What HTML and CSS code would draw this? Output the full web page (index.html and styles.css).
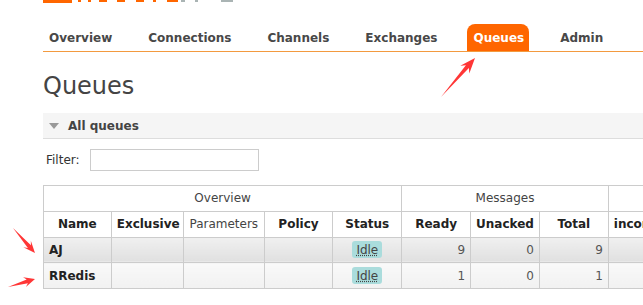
FILE: index.html
```html
<!DOCTYPE html>
<html lang="en">
<head>
    <meta charset="UTF-8">
    <meta name="viewport" content="width=device-width, initial-scale=1.0">
    <title>RabbitMQ Management</title>
    <link rel="stylesheet" href="styles.css">
</head>
<body>

<div class="page">
    <!-- logo, scrolled mostly out of view -->
    <svg class="logo" width="220" height="3" viewBox="0 0 220 3">
        <rect x="0" y="0" width="29" height="3" fill="#f60"/>
        <rect x="35" y="0" width="3" height="2" fill="#f60"/>
        <rect x="45" y="0" width="3" height="2" fill="#f60"/>
        <rect x="56" y="0" width="8" height="2" fill="#f60"/>
        <rect x="74" y="0" width="8" height="2" fill="#f60"/>
        <rect x="93" y="0" width="8" height="2" fill="#f60"/>
        <rect x="110" y="0" width="3" height="2" fill="#f60"/>
        <rect x="124" y="0" width="11" height="2" fill="#f60"/>
        <rect x="138" y="0" width="4" height="2" fill="#aab4b4"/>
        <rect x="152" y="0" width="3" height="2" fill="#aab4b4"/>
        <rect x="178" y="0" width="12" height="2" fill="#aab4b4"/>
    </svg>

    <ul class="tabs">
        <li>Overview</li>
        <li>Connections</li>
        <li>Channels</li>
        <li>Exchanges</li>
        <li class="active">Queues</li>
        <li>Admin</li>
    </ul>

    <h1>Queues</h1>

    <div class="section-head">
        <span class="triangle"></span>
        <h2>All queues</h2>
    </div>

    <div class="filter">
        <label for="filter">Filter:</label>
        <input type="text" id="filter">
    </div>

    <table class="list">
        <colgroup>
            <col class="c-name"><col class="c-excl"><col class="c-params"><col class="c-policy"><col class="c-status">
            <col class="c-num"><col class="c-num"><col class="c-num">
            <col class="c-rate"><col class="c-rate"><col class="c-rate">
        </colgroup>
        <thead>
            <tr class="group">
                <th colspan="5">Overview</th>
                <th colspan="3">Messages</th>
                <th colspan="3">Message rates</th>
            </tr>
            <tr>
                <th>Name</th>
                <th>Exclusive</th>
                <th class="plain">Parameters</th>
                <th>Policy</th>
                <th>Status</th>
                <th>Ready</th>
                <th>Unacked</th>
                <th>Total</th>
                <th class="left">incoming</th>
                <th>deliver / get</th>
                <th>ack</th>
            </tr>
        </thead>
        <tbody>
            <tr class="alt1">
                <td class="name">AJ</td>
                <td></td><td></td><td></td>
                <td class="c"><span class="state">Idle</span></td>
                <td class="r">9</td><td class="r">0</td><td class="r">9</td>
                <td class="r">0.00/s</td><td class="r">0.00/s</td><td class="r">0.00/s</td>
            </tr>
            <tr class="alt2">
                <td class="name">RRedis</td>
                <td></td><td></td><td></td>
                <td class="c"><span class="state">Idle</span></td>
                <td class="r">1</td><td class="r">0</td><td class="r">1</td>
                <td class="r">0.00/s</td><td class="r">0.00/s</td><td class="r">0.00/s</td>
            </tr>
        </tbody>
    </table>
</div>

<!-- red annotation arrows drawn over the screenshot -->
<svg class="marks" width="643" height="305" viewBox="0 0 643 305">
    <polygon fill="#ff3636" points="441,97 465.9,65.2 460.3,65.7 475,58 469.3,73.5 468.9,67.9"/>
    <polygon fill="#ff3636" points="13,228 30.9,245.3 30.85,240.7 35,253 23.35,247.3 27.9,247.9"/>
    <polygon fill="#ff3636" points="8,287 26.7,279.4 23.1,277.3 35,279 25.9,286.9 27.9,283.2"/>
</svg>

</body>
</html>
```

FILE: styles.css
```css
html, body {
    margin: 0;
    overflow: hidden;
}
body {
    font-family: "DejaVu Sans", Verdana, sans-serif;
    font-size: 12px;
    color: #484848;
    background: #fff;
}
.page {
    padding-left: 43px;
    width: 900px;
}
.logo {
    display: block;
}
.tabs {
    display: flex;
    gap: 25px;
    list-style: none;
    margin: 21px 0 0;
    padding: 0;
    border-bottom: 1px solid #f39a3f;
}
.tabs li {
    padding: 0 5px 0 6px;
    height: 27px;
    line-height: 28px;
    font-weight: bold;
    color: #484848;
}
.tabs li.active {
    background-color: #f60;
    color: #fff;
    border-radius: 8px 8px 0 0;
}
h1 {
    margin: 19px 0 0;
    font-size: 24px;
    font-weight: normal;
    line-height: 30px;
    color: #444;
}
.section-head {
    display: flex;
    align-items: center;
    margin-top: 12px;
    height: 25px;
    background-color: #f5f5f5;
    border-bottom: 1px solid #ddd;
}
.triangle {
    width: 0;
    height: 0;
    margin: 1px 9px 0 6px;
    border-left: 5px solid transparent;
    border-right: 5px solid transparent;
    border-top: 6px solid #999;
}
h2 {
    margin: 0;
    font-size: 12px;
    font-weight: bold;
    color: #444;
}
.filter {
    display: flex;
    align-items: center;
    margin-top: 10px;
    height: 22px;
}
.filter label {
    margin: 0 10px 0 3px;
    font-size: 12px;
    color: #333;
}
.filter input {
    box-sizing: border-box;
    width: 169px;
    height: 22px;
    border: 1px solid #ccc;
    margin: 0;
}
.list {
    margin-top: 14px;
    border-collapse: collapse;
    table-layout: fixed;
    width: 846px;
}
.list col.c-name { width: 58px; }
.list col.c-excl { width: 62px; }
.list col.c-params { width: 69px; }
.list col.c-policy { width: 59px; }
.list col.c-status { width: 59px; }
.list col.c-num { width: 59px; }
.list col.c-rate { width: 80px; }
.list th, .list td {
    border: 1px solid #ccc;
    height: 24.75px;
    padding: 0 5px;
    white-space: nowrap;
    overflow: hidden;
}
.list th {
    font-size: 12px;
    font-weight: bold;
    color: #222;
    text-align: center;
    background: #fff;
}
.list th.plain {
    font-weight: normal;
    color: #444;
}
.list th.left {
    text-align: left;
}
.list tr.group th {
    font-weight: normal;
    color: #444;
}
.list td {
    font-size: 12px;
    color: #555;
}
.list td.name {
    font-weight: bold;
    color: #222;
}
.list td.r {
    text-align: right;
}
.list td.c {
    text-align: center;
}
.list tr.alt1 td {
    background: linear-gradient(#f0f0f0, #e0e0e0);
}
.list tr.alt2 td {
    background: linear-gradient(#f9f9f9, #f1f1f1);
}
.state {
    display: inline-block;
    padding: 2px 4px 1px;
    border-radius: 3px;
    background-color: #aadcdc;
    color: #444;
    text-decoration: underline dotted;
}
.marks {
    position: absolute;
    left: 0;
    top: 0;
    pointer-events: none;
}
```
